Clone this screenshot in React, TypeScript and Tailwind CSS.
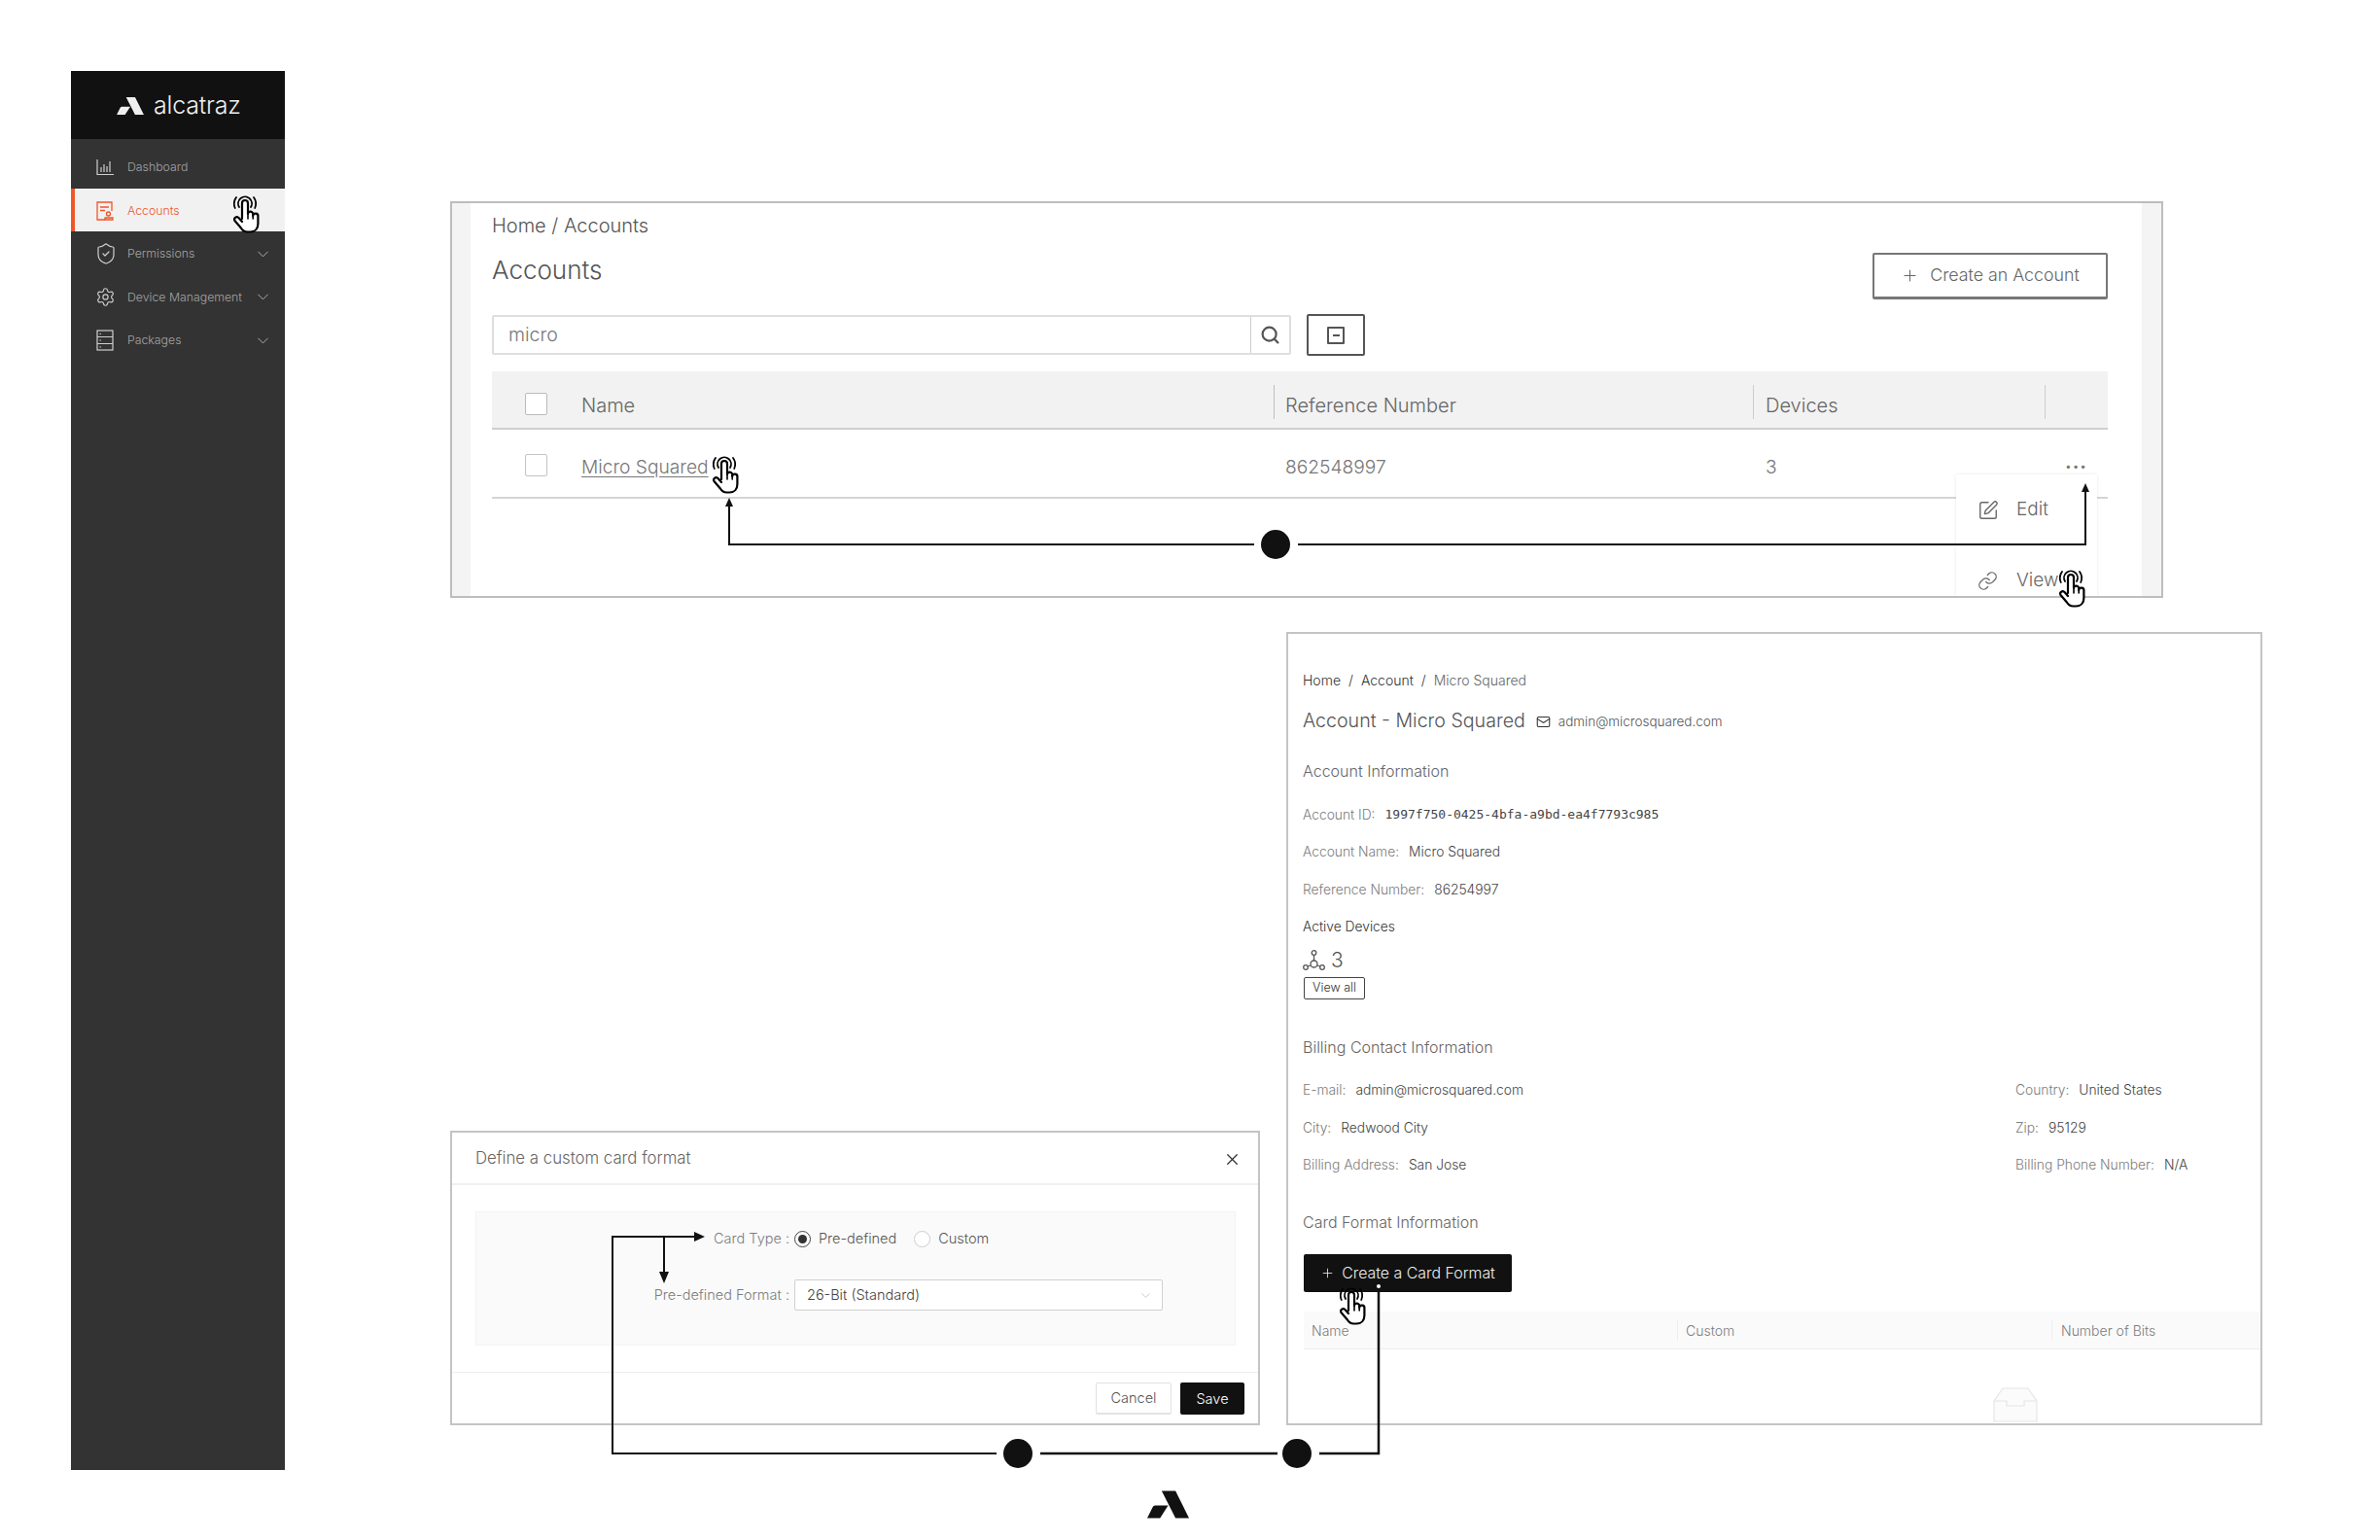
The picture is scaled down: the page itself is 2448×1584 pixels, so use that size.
import React from 'react';
import { ChevronDown, Link, Mail, Plus, Search, Settings, ShieldCheck, SquarePen, X } from 'lucide-react';

function Logo({ className, color }: { className: string; color: string }) {
  return (
    <svg className={className} viewBox="0 0 130 84" fill={color}>
      <path d="M45 0H88L130 84H88Z" />
      <path d="M24 45H65L40 84H0L15 54Q18 45 24 45Z" />
    </svg>
  );
}

// pointer with the tap ripples, used four times on the canvas
function Hand({ className }: { className: string }) {
  return (
    <svg className={className} viewBox="0 0 28 40" fill="none" stroke="#000" strokeLinecap="round" strokeLinejoin="round">
      <path d="M6 13A7 7 0 1 1 18 13" strokeWidth="1.8" />
      <path d="M1.800 14A11 11 0 0 1 3 3" strokeWidth="1.8" />
      <path d="M22.200 14A11 11 0 0 0 21 3" strokeWidth="1.8" />
      <path
        d="M9 25V9a3 3 0 0 1 6 0V20a2.600 2.600 0 0 1 5.200.5V22a2.600 2.600 0 0 1 5.200.6V30c0 5-3 8.500-8 8.500h-3c-3 0-5-1.500-6.500-4L1.500 27c-1.500-2.500 1.500-5 4-3L9 28"
        fill="#fff"
        strokeWidth="2.2"
      />
      <path d="M15 20V25M20.200 21V25" strokeWidth="1.600" />
    </svg>
  );
}

function NavItem({ icon, label, active, arrow }: { icon: React.ReactNode; label: string; active?: boolean; arrow?: boolean }) {
  return (
    <div
      className={`flex h-[44.5px] items-center pr-[13px] pt-[2px] text-[12.3px] ${
        active ? 'border-l-4 border-[#f0562a] bg-[#f1f1f1] pl-[22px] text-[#f0562a]' : 'pl-[26px] text-[#a3a3a3]'
      }`}
    >
      <span className={`flex w-[32px] shrink-0 items-center ${active ? '' : 'text-[#cfcfcf]'}`}>{icon}</span>
      <span className="flex-1 whitespace-nowrap">{label}</span>
      {arrow && <ChevronDown className="h-[19px] w-[19px] text-[#b5b5b5]" strokeWidth={1.200} />}
    </div>
  );
}

function Sidebar() {
  return (
    <div className="absolute left-[73px] top-[73px] flex h-[1439px] w-[220px] flex-col bg-[#333333]">
      <div className="flex h-[70px] shrink-0 items-center bg-[#111111] pl-[47px] pt-[1px] text-[#efefef]">
        <Logo className="h-[18px] w-[28px]" color="#efefef" />
        <span className="ml-[10px] text-[25px] font-light leading-none tracking-[-0.2px]">alcatraz</span>
      </div>
      <div className="pt-[6px]">
        <NavItem
          label="Dashboard"
          icon={
            <svg className="h-[18px] w-[18px]" viewBox="0 0 18 18" fill="none" stroke="currentColor" strokeWidth="1.200">
              <path d="M1 1V16.500H18M5 14V9M8 14V6M11 14V8M14 14V3" />
            </svg>
          }
        />
        <NavItem
          active
          label="Accounts"
          icon={
            <svg className="h-[20px] w-[18px]" viewBox="0 0 18 20" fill="none" stroke="currentColor" strokeWidth="1.300">
              <path d="M9 19H1V1H16V10M4 6H13M4 9.500H9" />
              <circle cx="12.500" cy="13" r="2" />
              <path d="M9 19V17H17V19Z" />
            </svg>
          }
        />
        <NavItem arrow label="Permissions" icon={<ShieldCheck className="-ml-[2px] h-[24px] w-[24px]" strokeWidth={1.200} />} />
        <NavItem arrow label="Device Management" icon={<Settings className="-ml-[1px] h-[21px] w-[21px]" strokeWidth={1.300} />} />
        <NavItem
          arrow
          label="Packages"
          icon={
            <svg className="h-[22px] w-[18px]" viewBox="0 0 18 22" fill="none" stroke="currentColor" strokeWidth="1.200">
              <rect x="1" y="1" width="16" height="20" />
              <path d="M1 7.500H17M1 14.500H17M3.500 4.500H5M3.500 11H5M3.500 18H5" />
            </svg>
          }
        />
      </div>
    </div>
  );
}

function AccountsPanel() {
  return (
    <div className="absolute left-[463px] top-[207px] flex h-[408px] w-[1762px] overflow-hidden border-2 border-[#bdbdbd] bg-white text-[#555555]">
      <div className="w-[19px] shrink-0 bg-[#f4f4f4]" />
      <div className="relative flex-1 pl-[22px] pr-[35px] pt-[11px]">
        <div className="h-[24px] text-[20px] leading-[24px] text-[#555555]">Home / Accounts</div>
        <div className="mt-[16px] flex h-[48px] items-start justify-between">
          <div className="text-[26px] leading-[36px] text-[#555555]">Accounts</div>
          <div className="flex h-[48px] w-[242px] items-center justify-center gap-[11px] rounded-[2px] border-2 border-b-[3px] border-[#777777] text-[17.800px] text-[#666666]">
            <Plus className="h-[19px] w-[19px]" strokeWidth={1.300} />
            Create an Account
          </div>
        </div>
        <div className="mt-[15px] flex h-[43px] items-center">
          <div className="flex h-[41px] w-[822px] rounded-[2px] border-2 border-[#dedede]">
            <div className="flex-1 pl-[15px] text-[19.500px] leading-[36px] text-[#777777]">micro</div>
            <div className="flex w-[40px] items-center justify-center border-l border-[#cccccc]">
              <Search className="h-[21px] w-[21px] text-[#555555]" strokeWidth={2.500} />
            </div>
          </div>
          <div className="ml-[16px] flex h-[43px] w-[60px] items-center justify-center rounded-[2px] border-2 border-[#555555]">
            <div className="flex h-[18px] w-[18px] items-center justify-center rounded-[1px] border-2 border-[#555555]">
              <div className="h-[2px] w-[7px] bg-[#555555]" />
            </div>
          </div>
        </div>
        <div className="mt-[16px] grid h-[60px] grid-cols-[804px_493px_300px_65px] items-center border-b-2 border-[#cfcfcf] bg-[#f2f2f2] pt-[4px] text-[20px] text-[#666666]">
          <div className="flex items-center pl-[34px] pt-[5px]">
            <span className="h-[23px] w-[23px] rounded-[2px] border border-[#bbbbbb] bg-white" />
            <span className="ml-[35px] pt-[3px]">Name</span>
          </div>
          <div className="flex h-[35px] items-center border-l border-[#bfbfbf] pl-[11px] pt-[8px]">Reference Number</div>
          <div className="flex h-[35px] items-center border-l border-[#cccccc] pl-[12px] pt-[8px]">Devices</div>
          <div className="h-[35px] border-l border-[#cccccc]" />
        </div>
        <div className="grid h-[71px] grid-cols-[804px_493px_300px_65px] items-center border-b-2 border-[#d5d5d5] pt-[5px] text-[19.200px] text-[#777777]">
          <div className="flex items-center pl-[34px]">
            <span className="h-[23px] w-[23px] rounded-[2px] border border-[#c4c4c4] bg-white" />
            <span className="ml-[35px] pt-[2px] underline underline-offset-[3px]">Micro Squared</span>
          </div>
          <div className="pl-[12px] pt-[2px]">862548997</div>
          <div className="pl-[13px] pt-[2px]">3</div>
          <div className="pb-[9px] pl-[21px] text-[20px] font-bold leading-none tracking-[1px]">...</div>
        </div>
        <div className="absolute left-[1528px] top-[279px] h-[129px] w-[145px] bg-white pl-[22px] text-[#666666] shadow-[0_0_3px_rgba(0,0,0,0.1)]">
          <div className="flex h-[72px] items-center pt-[1px] text-[19px]">
            <SquarePen className="h-[22px] w-[22px]" strokeWidth={1.500} />
            <span className="ml-[18px]">Edit</span>
          </div>
          <div className="mt-[22px] flex items-center pt-[1px] text-[19px]">
            <Link className="h-[21px] w-[21px]" strokeWidth={1.500} />
            <span className="ml-[19px]">View</span>
          </div>
        </div>
      </div>
      <div className="w-[20px] shrink-0 bg-[#f4f4f4]" />
    </div>
  );
}

function Field({ label, value, mono, className }: { label: string; value: string; mono?: boolean; className?: string }) {
  return (
    <div className={`flex h-[20px] items-center whitespace-nowrap text-[13.800px] leading-[20px] ${className ?? ''}`}>
      <span className="text-[#7d7d7d]">{label}:</span>
      <span className={`ml-[10px] text-[#444444] ${mono ? "font-['DejaVu_Sans_Mono'] text-[13px] font-normal" : ''}`}>{value}</span>
    </div>
  );
}

function DetailPanel() {
  return (
    <div className="absolute left-[1323px] top-[650px] h-[816px] w-[1004px] overflow-hidden border-2 border-[#c4c4c4] bg-white pl-[15px] pt-[37px]">
      <div className="flex h-[20px] items-center gap-[8px] text-[14px] text-[#333333]">
        <span>Home</span>
        <span>/</span>
        <span>Account</span>
        <span>/</span>
        <span className="text-[#666666]">Micro Squared</span>
      </div>
      <div className="mt-[18px] flex h-[30px] items-center">
        <span className="text-[19.600px] text-[#555555]">Account - Micro Squared</span>
        <Mail className="ml-[11px] h-[15px] w-[15px] text-[#333333]" strokeWidth={1.700} />
        <span className="ml-[8px] text-[13.500px] text-[#555555]">admin@microsquared.com</span>
      </div>
      <div className="mt-[24px] h-[24px] text-[16px] leading-[24px] text-[#666666]">Account Information</div>
      <Field className="mt-[23px]" label="Account ID" value="1997f750-0425-4bfa-a9bd-ea4f7793c985" mono />
      <Field className="mt-[18px]" label="Account Name" value="Micro Squared" />
      <Field className="mt-[19px]" label="Reference Number" value="86254997" />
      <div className="mt-[18px] h-[20px] text-[13.800px] leading-[20px] text-[#333333]">Active Devices</div>
      <div className="mt-[12px] flex h-[24px] items-center gap-[6px]">
        <svg className="h-[21px] w-[23px]" viewBox="0 0 23 21" fill="none" stroke="#555555" strokeWidth="1.300">
          <circle cx="11.500" cy="3" r="2.300" />
          <circle cx="3" cy="18" r="2.300" />
          <circle cx="20" cy="18" r="2.300" />
          <circle cx="11.500" cy="14.500" r="3.500" />
          <path d="M11.500 5.300V11M5 17L8.500 16M18 17L14.500 16" />
        </svg>
        <span className="text-[21px] leading-none text-[#555555]">3</span>
      </div>
      <div className="ml-[1px] mt-[6px] flex h-[23px] w-[63px] items-center justify-center rounded-[2px] border border-[#444444] text-[12.500px] text-[#333333]">
        View all
      </div>
      <div className="mt-[37px] h-[24px] text-[16px] leading-[24px] text-[#666666]">Billing Contact Information</div>
      <div className="mt-[22px] grid grid-cols-[733px_1fr] gap-y-[18.500px]">
        <Field label="E-mail" value="admin@microsquared.com" />
        <Field label="Country" value="United States" />
        <Field label="City" value="Redwood City" />
        <Field label="Zip" value="95129" />
        <Field label="Billing Address" value="San Jose" />
        <Field label="Billing Phone Number" value="N/A" />
      </div>
      <div className="mt-[37px] h-[24px] text-[16px] leading-[24px] text-[#666666]">Card Format Information</div>
      <div className="ml-[1px] mt-[21px] flex h-[39px] w-[214px] items-center justify-center gap-[7px] rounded-[2px] bg-[#111111] text-[15.900px] text-[#eeeeee]">
        <Plus className="h-[15px] w-[15px]" strokeWidth={1.300} />
        Create a Card Format
      </div>
      <div className="ml-[1px] mt-[20px] grid h-[39px] grid-cols-[384px_385px_1fr] items-center border-b border-[#eeeeee] bg-[#fafafa] text-[14px] text-[#7d7d7d]">
        <div className="pl-[8px]">Name</div>
        <div className="border-l border-[#eeeeee] pl-[8px]">Custom</div>
        <div className="border-l border-[#eeeeee] pl-[9px]">Number of Bits</div>
      </div>
      <div className="ml-[709px] mt-[39px]">
        <svg className="h-[36px] w-[48px]" viewBox="0 0 48 36" fill="#fbfbfb" stroke="#e6e6e6" strokeWidth="1.200">
          <path d="M2 14L11 1H37L46 14V35H2Z" />
          <path d="M2 14H15V19H33V14H46" fill="none" />
        </svg>
      </div>
    </div>
  );
}

function FormatModal() {
  return (
    <div className="absolute left-[463px] top-[1163px] flex h-[303px] w-[833px] flex-col border-2 border-[#c4c4c4] bg-white">
      <div className="flex h-[54px] shrink-0 items-center justify-between border-b-2 border-[#f0f0f0] pl-[24px] pr-[17px] pt-[2px]">
        <span className="text-[16.800px] text-[#666666]">Define a custom card format</span>
        <X className="h-[19px] w-[19px] text-[#333333]" strokeWidth={1.600} />
      </div>
      <div className="ml-[24px] mr-[23px] mt-[27px] h-[138px] shrink-0 border border-[#f3f3f3] bg-[#fafafa] pt-[15px] text-[14.500px]">
        <div className="flex h-[24px] items-center">
          <div className="w-[322px] text-right text-[#7d7d7d]">Card Type :</div>
          <div className="ml-[5px] flex items-center text-[#555555]">
            <span className="flex h-[17px] w-[17px] items-center justify-center rounded-full border border-[#444444] bg-white">
              <span className="h-[9px] w-[9px] rounded-full bg-[#333333]" />
            </span>
            <span className="ml-[8px]">Pre-defined</span>
            <span className="ml-[18px] h-[17px] w-[17px] rounded-full border border-[#cccccc] bg-white" />
            <span className="ml-[8px]">Custom</span>
          </div>
        </div>
        <div className="mt-[30px] flex h-[32px] items-center">
          <div className="w-[322px] text-right text-[#7d7d7d]">Pre-defined Format :</div>
          <div className="ml-[5px] flex h-[32px] w-[379px] items-center justify-between rounded-[2px] border border-[#d0d0d0] bg-white pl-[12px] pr-[9px] text-[#444444]">
            26-Bit (Standard)
            <ChevronDown className="h-[15px] w-[15px] text-[#bbbbbb]" strokeWidth={1.200} />
          </div>
        </div>
      </div>
      <div className="mt-[27px] flex flex-1 items-start justify-end gap-[9px] border-t border-[#eeeeee] pr-[14px] pt-[10px] text-[14.500px]">
        <div className="flex h-[33px] w-[78px] items-center justify-center rounded-[2px] border border-b-2 border-[#e2e2e2] text-[#555555]">Cancel</div>
        <div className="flex h-[33px] w-[66px] items-center justify-center rounded-[2px] bg-[#111111] text-white">Save</div>
      </div>
    </div>
  );
}

// arrows and dots that tie the screens together, drawn over the panels
function Connectors() {
  return (
    <svg className="pointer-events-none absolute left-0 top-0 h-[1584px] w-[2448px]" viewBox="0 0 2448 1584" fill="none" stroke="#111111" strokeWidth="2">
      <path d="M750 520V560H1290M1335 560H2145V505" />
      <path d="M750 512L746 521H754Z M2145 497L2141 506H2149Z" fill="#111111" stroke="none" />
      <circle cx="1312" cy="560" r="15" fill="#111111" stroke="none" />
      <path d="M1025 1495H630V1272H716M683 1272V1312" />
      <path d="M725 1272L714 1267V1277Z M683 1320L678 1308H688Z" fill="#111111" stroke="none" />
      <circle cx="1047" cy="1495" r="15" fill="#111111" stroke="none" />
      <path d="M1070 1495H1314" strokeWidth="2.500" />
      <circle cx="1334" cy="1495" r="15" fill="#111111" stroke="none" />
      <path d="M1357 1495H1418V1323" strokeWidth="2.500" />
      <circle cx="1418" cy="1323" r="2" fill="#ffffff" stroke="none" />
    </svg>
  );
}

export default function App() {
  return (
    <div className="relative h-[1584px] w-[2448px] overflow-hidden bg-white font-['Inter',sans-serif] font-light">
      <Sidebar />
      <AccountsPanel />
      <DetailPanel />
      <FormatModal />
      <Connectors />
      <Hand className="absolute left-[240px] top-[200px] h-[40px] w-[28px]" />
      <Hand className="absolute left-[733px] top-[468px] h-[40px] w-[28px]" />
      <Hand className="absolute left-[2118px] top-[585px] h-[40px] w-[28px]" />
      <Hand className="absolute left-[1378px] top-[1323px] h-[40px] w-[28px]" />
      <Logo className="absolute left-[1180px] top-[1533px] h-[29px] w-[43px]" color="#111111" />
    </div>
  );
}
